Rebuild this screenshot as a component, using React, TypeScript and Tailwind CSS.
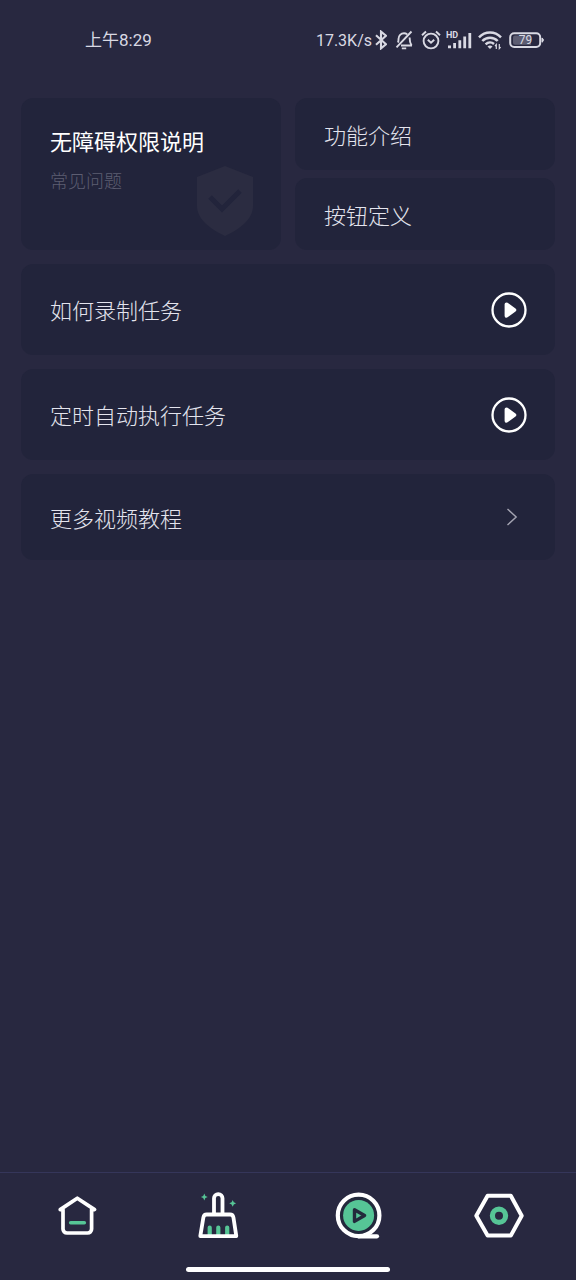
import type { ReactNode } from "react";

interface VideoRow {
  id: string;
  title: string;
}

interface Tab {
  id: string;
  label: string;
  icon: ReactNode;
}

const VIDEO_ROWS: VideoRow[] = [
  { id: "record", title: "如何录制任务" },
  { id: "schedule", title: "定时自动执行任务" },
];

const TABS: Tab[] = [
  { id: "home", label: "首页", icon: <HomeIcon /> },
  { id: "clean", label: "清理", icon: <BroomIcon /> },
  { id: "video", label: "教程", icon: <DiscIcon /> },
  { id: "settings", label: "设置", icon: <HexIcon /> },
];

function HomeIcon() {
  return (
    <svg className="size-14" viewBox="0 0 56 56" fill="none" strokeLinecap="round" strokeLinejoin="round">
      <path d="M11.2 21.6 28.3 10.2 45.6 21.6H42.6V41a4 4 0 0 1-4 4H18a4 4 0 0 1-4-4V21.6Z" stroke="#fff" strokeWidth="3.7" />
      <path d="M21.6 34.7H35.4" stroke="#56c596" strokeWidth="3.4" />
    </svg>
  );
}

function BroomIcon() {
  return (
    <svg className="size-14" viewBox="0 0 56 56" fill="none" strokeLinejoin="round">
      <path d="M19.7 47V39.5M28.3 47V39.5M37.2 47V39.5" stroke="#56c596" strokeWidth="4.2" strokeLinecap="round" />
      <path d="M24 26.5V10.3a4.2 4.2 0 0 1 8.5 0V26.5" stroke="#fff" strokeWidth="3.8" />
      <path d="M17 26.5H40a3.5 3.5 0 0 1 3.4 2.8L46.3 48.1H10.3L13.4 29.3A3.5 3.5 0 0 1 17 26.5Z" stroke="#fff" strokeWidth="3.8" />
      <path
        d="M14.3 5.6 15.4 7.9 17.7 9 15.4 10.1 14.3 12.4 13.2 10.1 10.9 9 13.2 7.9ZM42.7 11.9 43.8 14.2 46.1 15.3 43.8 16.4 42.7 18.7 41.6 16.4 39.3 15.3 41.6 14.2Z"
        fill="#56c596"
      />
    </svg>
  );
}

function DiscIcon() {
  return (
    <svg className="size-14" viewBox="0 0 56 56" fill="none" strokeLinecap="round" strokeLinejoin="round">
      <circle cx="28.6" cy="27.4" r="20.8" fill="#23293c" stroke="#fff" strokeWidth="4.2" />
      <path d="M28.6 48.3H47" stroke="#fff" strokeWidth="4.2" />
      <circle cx="28.6" cy="27.4" r="15.5" fill="#56c596" />
      <path d="M24.5 21.7 34.6 27.5 24.5 33.4Z" stroke="#23293c" strokeWidth="3.4" />
    </svg>
  );
}

function HexIcon() {
  return (
    <svg className="size-14" viewBox="0 0 56 56" fill="none" strokeLinejoin="round">
      <path d="M5.3 27.7 16.6 7.8H39.8L50.7 27.7 39.8 47.6H16.6Z" stroke="#fff" strokeWidth="4" />
      <circle cx="28" cy="27.7" r="6.6" stroke="#56c596" strokeWidth="5.2" />
    </svg>
  );
}

function PlayIcon() {
  return (
    <svg className="size-9" viewBox="0 0 36 36" fill="none">
      <circle cx="18" cy="18" r="16.5" stroke="#fff" strokeWidth="2.3" />
      <path d="M15.5 12.3 23.4 18 15.5 23.8Z" fill="#fff" stroke="#fff" strokeWidth="3.8" strokeLinejoin="round" />
    </svg>
  );
}

function ShieldIcon() {
  return (
    <svg className="h-[70px] w-14 shrink-0" viewBox="0 0 56 70" fill="none">
      <path d="M28 0 56 11V40C56 54 41 64 28 70 15 64 0 54 0 40V11Z" fill="#2b2c41" />
      <path d="M13 31 25 43 43 25" stroke="#22243b" strokeWidth="5" />
    </svg>
  );
}

function StatusBar() {
  return (
    <header className="flex h-20 items-center justify-between pl-[85px] pr-[31px] font-[Roboto,'Noto_Sans_CJK_SC',sans-serif] text-[#d9d9e3]">
      <span className="pt-[2px] text-[17px]">上午8:29</span>
      <div className="flex items-center">
        <span className="mr-[3px] pt-[2px] text-[16px]">17.3K/s</span>
        <svg className="mr-2 h-5 w-3" viewBox="0 0 12 20" fill="none" stroke="currentColor" strokeWidth="2.1">
          <path d="M1 5.2 11 14.2 6 18.4V1.6L11 5.8 1 14.8" />
        </svg>
        <svg className="mr-2 h-5 w-[18px]" viewBox="0 0 18 20" fill="none" stroke="currentColor" strokeWidth="1.9">
          <path d="M6 15.5H17M2.8 12.5C3.6 11.5 3.5 10.5 3.5 9 3.5 5.5 6 3.3 9 3.3 10.2 3.3 11.3 3.7 12.2 4.3M14.6 7.5C14.6 11.5 14.8 13 16.6 15.5M16.5 1.5 1.5 17.3M6.8 18.4H11.2" />
        </svg>
        <svg className="mr-[5px] h-5 w-5" viewBox="0 0 20 20" fill="none" stroke="currentColor" strokeWidth="1.9">
          <circle cx="10" cy="11" r="7.4" />
          <path d="M6.8 9.7 10 12.7 13.2 9.7M1 5.3 5 1.5M19 5.3 15 1.5" />
        </svg>
        <svg className="mr-[6px] h-5 w-[26px]" viewBox="0 0 26 20" fill="currentColor">
          <text x="0" y="8" fontSize="9" fontWeight="700">
            HD
          </text>
          <path d="M2 15.5H5V18.3H2ZM7.2 13H10V18.3H7.2ZM12.4 10.3H15.2V18.3H12.4ZM17.3 6.6H20.1V18.3H17.3ZM22.4 3H25.2V18.3H22.4Z" />
        </svg>
        <svg className="mr-[7px] h-5 w-6" viewBox="0 0 24 20" fill="none" stroke="currentColor" strokeWidth="2.5">
          <path d="M1 7.3C7.2.9 16.8.9 23 7.3M4.3 11C8.6 6.6 15.4 6.6 19.7 11M7.6 14.3C10.2 11.9 13.6 11.9 16 14" />
          <path d="M12 19 9.5 16.4C11 15.2 13 15.2 14.5 16.4Z" fill="currentColor" stroke="none" />
          <path d="M18.3 19V14.5L17 16M21.3 14V18.6L22.6 17.2" strokeWidth="1.2" />
        </svg>
        <svg className="h-5 w-9" viewBox="0 0 36 20" fill="none">
          <rect x="1.2" y="3.2" width="30" height="13.8" rx="4" stroke="currentColor" strokeWidth="2" />
          <path d="M6 5.5H22V14.7H6A2 2 0 0 1 4 12.7V7.5A2 2 0 0 1 6 5.5Z" fill="#5d5d72" />
          <path d="M33 8A2.3 2.3 0 0 1 33 12.2Z" fill="currentColor" stroke="currentColor" />
          <text x="16.5" y="14.2" fontSize="12" textAnchor="middle" fill="currentColor">
            79
          </text>
        </svg>
      </div>
    </header>
  );
}

export default function App() {
  return (
    <div className="flex min-h-screen flex-col bg-[#282840] font-['Noto_Sans_CJK_SC',sans-serif]">
      <StatusBar />

      <main className="flex flex-1 flex-col gap-[14px] px-[21px] pt-[18px] text-[22px] font-light text-[#e4e4ee]">
        <div className="grid grid-cols-2 gap-[14px]">
          <button className="flex justify-between rounded-xl bg-[#22243b] pb-[14px] pl-[29px] pr-7 text-left">
            <span className="flex flex-col gap-[14px] pt-7">
              <span className="-mr-10 whitespace-nowrap font-normal leading-7 text-white">无障碍权限说明</span>
              <span className="text-[18px] leading-6 text-[#5d5e72]">常见问题</span>
            </span>
            <span className="self-end">
              <ShieldIcon />
            </span>
          </button>
          <div className="flex flex-col gap-2">
            <button className="h-[72px] rounded-xl bg-[#22243b] px-[29px] text-left">功能介绍</button>
            <button className="h-[72px] rounded-xl bg-[#22243b] px-[29px] text-left">按钮定义</button>
          </div>
        </div>

        {VIDEO_ROWS.map((row) => (
          <button key={row.id} className="flex h-[91px] items-center justify-between rounded-xl bg-[#22243b] pl-[29px] pr-7 text-left">
            {row.title}
            <PlayIcon />
          </button>
        ))}

        <button className="flex h-[86px] items-center justify-between rounded-xl bg-[#22243b] pl-[29px] pr-[37px] text-left">
          更多视频教程
          <svg className="h-[18px] w-3" viewBox="0 0 12 18" fill="none">
            <path d="M1.5 1 10.2 9 1.5 17" stroke="#a4a4b2" strokeWidth="1.4" />
          </svg>
        </button>
      </main>

      <footer className="border-t border-[#35365a] pt-[15px] pb-2">
        <nav className="grid grid-cols-4 px-[7px]">
          {TABS.map((tab) => (
            <button key={tab.id} aria-label={tab.label} className="flex justify-center">
              {tab.icon}
            </button>
          ))}
        </nav>
        <div className="mx-auto mt-[23px] h-[5px] w-[204px] rounded-full bg-white" />
      </footer>
    </div>
  );
}
